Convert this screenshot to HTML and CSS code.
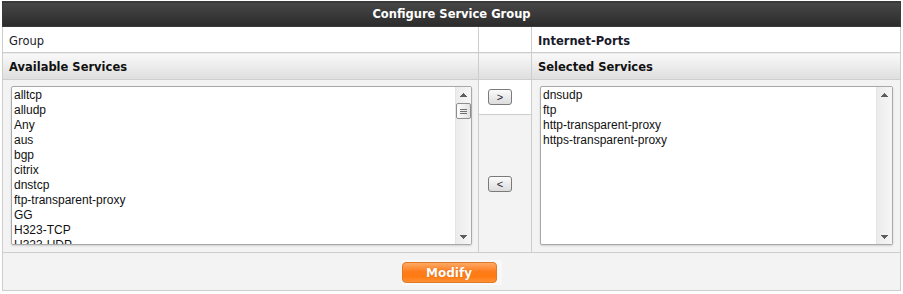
FILE: index.html
```html
<!DOCTYPE html>
<html lang="en-US">

<head>
    <meta charset="UTF-8">
    <meta name="viewport" content="width=device-width, initial-scale=1">
    <title>Configure Service Group</title>
    <link rel="stylesheet" href="styles.css">
</head>

<body>
    <table class="panel">
        <tr class="title-row">
            <th colspan="3">Configure Service Group</th>
        </tr>
        <tr class="info-row">
            <td class="col-left">Group</td>
            <td class="col-mid"></td>
            <td class="col-right"><b>Internet-Ports</b></td>
        </tr>
        <tr class="head-row">
            <th class="col-left">Available Services</th>
            <th class="col-mid"></th>
            <th class="col-right">Selected Services</th>
        </tr>
        <tr class="list-row">
            <td class="list-cell" rowspan="2">
                <div class="listbox">
                    <div class="options" id="available"></div>
                    <div class="scrollbar">
                        <span class="arrow arrow-up"></span>
                        <span class="track"><span class="thumb"></span></span>
                        <span class="arrow arrow-down"></span>
                    </div>
                </div>
            </td>
            <td class="move move-add"><button class="small-btn" type="button">&gt;</button></td>
            <td class="list-cell list-right" rowspan="2">
                <div class="listbox">
                    <div class="options" id="selected"></div>
                    <div class="scrollbar">
                        <span class="arrow arrow-up"></span>
                        <span class="track"></span>
                        <span class="arrow arrow-down"></span>
                    </div>
                </div>
            </td>
        </tr>
        <tr class="list-row-low">
            <td class="move"><button class="small-btn" type="button">&lt;</button></td>
        </tr>
        <tr class="action-row">
            <td colspan="3">
                <span class="btn-wrap"><button class="modify" type="button">Modify</button></span>
            </td>
        </tr>
    </table>

    <script>
        const available = ["alltcp", "alludp", "Any", "aus", "bgp", "citrix", "dnstcp", "ftp-transparent-proxy", "GG",
            "H323-TCP", "H323-UDP"];
        const selected = ["dnsudp", "ftp", "http-transparent-proxy", "https-transparent-proxy"];

        fillList = (id, items) => {
            document.querySelector(`#${id}`).innerHTML = items.map(item => `<div class="option">${item}</div>`).join("");
        };

        fillList("available", available);
        fillList("selected", selected);
    </script>
</body>

</html>
```

FILE: styles.css
```css
/* Page */
body {
    margin: 0;
    background: #fff;
    font-family: "DejaVu Sans", Verdana, sans-serif;
    font-size: 11.5px;
    color: #1a1a2a;
}

/* Panel table */
.panel {
    margin: 1px 0 0 2px;
    width: 899px;
    border-collapse: collapse;
    border: 1px solid #c4c4c4;
}

.panel td,
.panel th {
    border: 1px solid #cdcdcd;
    padding: 2px 6px 0;
    text-align: left;
}

.title-row th {
    height: 24px;
    padding: 0;
    text-align: center;
    color: #fff;
    font-weight: bold;
    background: linear-gradient(#474747, #2b2b2b);
    border-color: #3a3a3a;
}

.info-row td {
    height: 23px;
    background: #fff;
}

.head-row th {
    height: 24px;
    font-weight: bold;
    color: #111;
    background: linear-gradient(#f9f9f9, #dedede);
}

.col-left {
    width: 463px;
}

.col-mid {
    width: 40px;
}

/* Lists */
.list-row td,
.list-row-low td {
    background: #f3f3f3;
}

.list-cell {
    padding: 6px 6px 7px 8px !important;
    vertical-align: top;
}

.list-right {
    padding-right: 7px !important;
}

.listbox {
    display: flex;
    height: 157px;
    background: #fff;
    border: 1px solid #a9a9a9;
    border-radius: 2px;
    box-shadow: 0 1px 2px rgba(0, 0, 0, 0.15);
    font-family: "Liberation Sans", Arial, sans-serif;
    font-size: 12px;
    color: #111;
}

.options {
    flex: 1;
    overflow: hidden;
    padding-top: 1px;
}

.option {
    height: 15px;
    line-height: 15px;
    padding: 0 2px;
    white-space: nowrap;
}

/* Drawn scrollbar, as the old browser showed it */
.scrollbar {
    display: flex;
    flex-direction: column;
    width: 15px;
    background: linear-gradient(to right, #ececec, #f6f6f6);
    border-left: 1px solid #e4e4e4;
}

.arrow {
    height: 15px;
    background-repeat: no-repeat;
    background-position: center;
    background-size: 7px 4px;
}

.arrow-up {
    background-image: conic-gradient(from 135deg at 50% 0, #5e5e5e 90deg, transparent 0);
}

.arrow-down {
    background-image: conic-gradient(from -45deg at 50% 100%, #5e5e5e 90deg, transparent 0);
}

.scrollbar .track {
    flex: 1;
    display: flex;
    flex-direction: column;
    padding-top: 1px;
}

.thumb {
    height: 14px;
    border: 1px solid #8d8d8d;
    border-radius: 2px;
    background: repeating-linear-gradient(#707070 0 1px, transparent 1px 2px) center / 7px 5px no-repeat,
        linear-gradient(to right, #fcfcfc, #e2e2e2);
}

/* Move buttons */
.move {
    text-align: left !important;
    vertical-align: middle;
    padding: 0 0 0 9px !important;
}

.list-row .move-add {
    height: 34px;
    background: #fff;
}

.small-btn {
    width: 24px;
    height: 16px;
    padding: 0;
    border: 1px solid #7a7a7a;
    border-radius: 3px;
    background: linear-gradient(#fbfbfb, #dcdcdc);
    font-family: "Liberation Sans", Arial, sans-serif;
    font-size: 11px;
    line-height: 12px;
    color: #223;
}

/* Actions */
.action-row td {
    height: 35px;
    text-align: center;
    background: #f3f3f3;
}

.btn-wrap {
    display: inline-block;
    padding: 2px 5px 2px 0;
    background: #f8f8f8;
}

.modify {
    display: block;
    width: 95px;
    height: 21px;
    padding: 0;
    border: 1px solid #e07a26;
    border-radius: 4px;
    background: linear-gradient(#ffaa66 0%, #ff7c1c 45%, #ff7a10 70%, #ff9036 100%);
    color: #fff;
    font-family: "DejaVu Sans", Verdana, sans-serif;
    font-size: 12px;
    font-weight: bold;
    text-shadow: 0 0 1px #c05a00;
}
```
